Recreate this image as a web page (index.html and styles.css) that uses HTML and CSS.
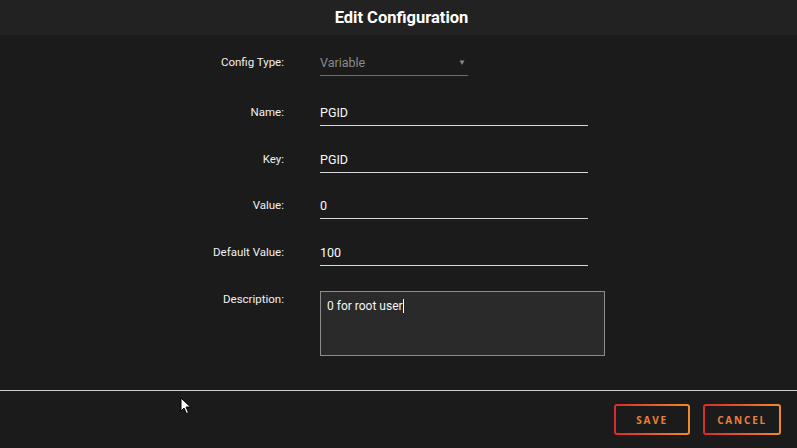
FILE: index.html
```html
<!DOCTYPE html>
<html>
<head>
    <title>Edit Configuration</title>
    <meta charset="UTF-8">
    <meta name="viewport" content="width=device-width, initial-scale=1.0">
    <link rel="stylesheet" href="styles.css">
</head>
<body>
<div class="dialog">
    <header class="dialog-head">
        <h1>Edit Configuration</h1>
    </header>
    <main class="dialog-body">
        <div class="form">
            <label class="label">Config Type:</label>
            <div class="field select">
                <span class="muted">Variable</span>
                <span class="arrow">&#9660;</span>
            </div>

            <label class="label">Name:</label>
            <div class="field wide">PGID</div>

            <label class="label">Key:</label>
            <div class="field wide">PGID</div>

            <label class="label">Value:</label>
            <div class="field wide">0</div>

            <label class="label">Default Value:</label>
            <div class="field wide">100</div>

            <label class="label top">Description:</label>
            <div class="textarea">0 for root user<span class="caret"></span></div>
        </div>
    </main>
    <footer class="dialog-foot">
        <button class="btn">SAVE</button>
        <button class="btn">CANCEL</button>
    </footer>
</div>

<!-- mouse pointer captured in the screenshot -->
<svg class="pointer" width="12" height="18" viewBox="0 0 12 18">
    <path d="M1 1 L1 14 L4 11 L6.5 16.5 L8.5 15.5 L6 10 L10.5 10 Z" fill="#fff" stroke="#000" stroke-width="1"/>
</svg>
</body>
</html>
```

FILE: styles.css
```css
html, body {
    margin: 0;
    height: 100%;
}

body {
    background-color: #1b1b1b;
    color: #f2f2f2;
    font-family: Roboto, "Open Sans", Arial, sans-serif;
    position: relative;
    overflow: hidden;
}

.dialog {
    display: flex;
    flex-direction: column;
    height: 448px;
}

.dialog-head {
    height: 35px;
    background-color: #222222;
    display: flex;
    align-items: center;
    justify-content: center;
    padding-left: 6px;
}

.dialog-head h1 {
    margin: 0;
    font-size: 16.5px;
    font-weight: 700;
    color: #fff;
}

.dialog-body {
    flex: 1;
    padding-top: 14px;
    border-bottom: 1px solid #cfcfcf;
}

.form {
    display: grid;
    grid-template-columns: 120px auto;
    column-gap: 36px;
    row-gap: 19.5px;
    margin-left: 164px;
    align-items: start;
}

.label {
    text-align: right;
    font-size: 11.5px;
    color: #f0f0f0;
    line-height: 27px;
}

.label.top {
    line-height: 14px;
    margin-top: 7px;
}

.field {
    height: 26px;
    border-bottom: 1px solid #d8d8d8;
    font-size: 12.5px;
    line-height: 27px;
    color: #fafafa;
}

.field.wide {
    width: 268px;
}

.select {
    width: 148px;
    display: flex;
    justify-content: space-between;
    border-bottom-color: #6e6e6e;
    margin-bottom: 3.5px;
}

.muted {
    color: #8a8a8a;
}

.arrow {
    font-size: 8px;
    color: #8a8a8a;
    padding-right: 2px;
}

.textarea {
    margin-top: 6px;
    width: 271px;
    height: 51px;
    padding: 6px;
    background-color: #2a2a2a;
    border: 1px solid #8c8c8c;
    font-size: 12px;
    line-height: 16px;
    color: #f4f4f4;
}

.caret {
    display: inline-block;
    width: 1px;
    height: 14px;
    background-color: #fff;
    vertical-align: -3px;
}

.dialog-foot {
    height: 57px;
    display: flex;
    justify-content: flex-end;
    align-items: center;
    gap: 13px;
    padding-right: 16px;
}

.btn {
    height: 31px;
    min-width: 76px;
    padding: 0 12px;
    border: 2px solid transparent;
    border-radius: 3px;
    background: linear-gradient(#1b1b1b, #1b1b1b) padding-box,
                linear-gradient(to right, #d92a2c, #f08c2a) border-box;
    color: #e9803a;
    font-family: "Open Sans", Roboto, sans-serif;
    font-size: 10px;
    font-weight: 700;
    letter-spacing: 1.8px;
    cursor: pointer;
}

.pointer {
    position: absolute;
    left: 180px;
    top: 397px;
}
```
